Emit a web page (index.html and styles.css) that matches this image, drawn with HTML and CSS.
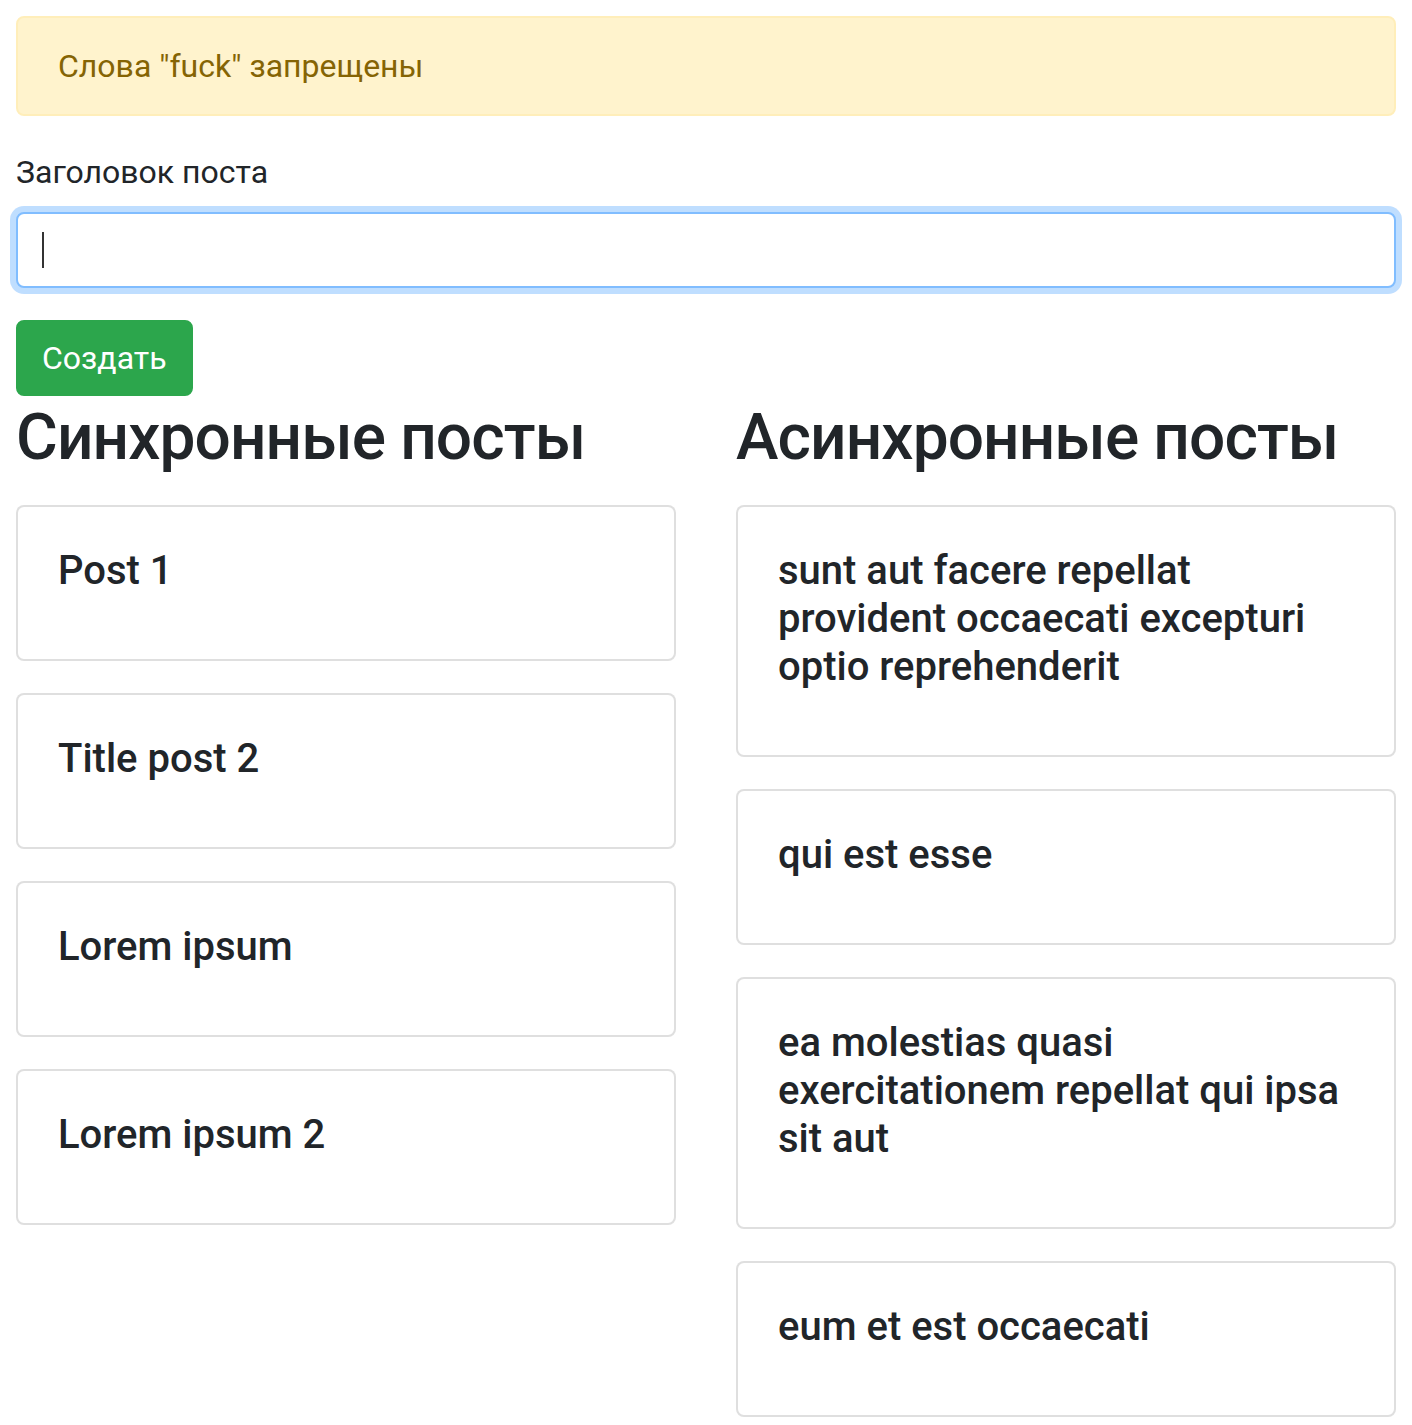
FILE: index.html
```html
<!DOCTYPE html>
<html lang="ru">
<head>
<meta charset="utf-8">
<title>Посты</title>
<link rel="stylesheet" href="styles.css">
</head>
<body>
<div class="alert">Слова "fuck" запрещены</div>
<form class="post-form">
  <div class="form-group">
    <label class="label" for="title">Заголовок поста</label>
    <div class="input-wrap">
      <input id="title" class="input input-focus" type="text">
      <span class="caret"></span>
    </div>
  </div>
  <button type="button" class="btn">Создать</button>
</form>
<div class="row">
  <div class="col">
    <h2 class="heading">Синхронные посты</h2>
    <div class="card"><div class="card-body"><h5 class="card-title">Post 1</h5></div></div>
    <div class="card"><div class="card-body"><h5 class="card-title">Title post 2</h5></div></div>
    <div class="card"><div class="card-body"><h5 class="card-title">Lorem ipsum</h5></div></div>
    <div class="card"><div class="card-body"><h5 class="card-title">Lorem ipsum 2</h5></div></div>
  </div>
  <div class="col">
    <h2 class="heading">Асинхронные посты</h2>
    <div class="card"><div class="card-body"><h5 class="card-title">sunt aut facere repellat provident occaecati excepturi optio reprehenderit</h5></div></div>
    <div class="card"><div class="card-body"><h5 class="card-title">qui est esse</h5></div></div>
    <div class="card"><div class="card-body"><h5 class="card-title">ea molestias quasi exercitationem repellat qui ipsa sit aut</h5></div></div>
    <div class="card"><div class="card-body"><h5 class="card-title">eum et est occaecati</h5></div></div>
  </div>
</div>
</body>
</html>
```
FILE: styles.css
```css
* { box-sizing: border-box; }
html, body { margin: 0; padding: 0; }
body {
  padding: 16px;
  font-family: Roboto, "Noto Sans", "Liberation Sans", sans-serif;
  font-size: 32px;
  line-height: 1.5;
  color: #212529;
  background: #fff;
}
.alert {
  padding: 24px 40px;
  margin-bottom: 32px;
  border: 2px solid #ffeeba;
  border-radius: 8px;
  background: #fff3cd;
  color: #856404;
}
.post-form { margin: 0; }
.form-group { margin-bottom: 32px; }
.label {
  display: inline-block;
  margin-bottom: 16px;
}
.input-wrap { position: relative; }
.input {
  display: block;
  width: 100%;
  height: 76px;
  padding: 12px 24px;
  font-family: inherit;
  font-size: 32px;
  line-height: 1.5;
  color: #495057;
  background: #fff;
  border: 2px solid #ced4da;
  border-radius: 8px;
  outline: none;
  caret-color: transparent;
}
.input-focus {
  border-color: #80bdff;
  box-shadow: 0 0 0 6px rgba(0, 123, 255, 0.25);
}
.caret {
  position: absolute;
  left: 26px;
  top: 20px;
  width: 2px;
  height: 36px;
  background: #333;
}
.btn {
  display: inline-block;
  padding: 12px 24px;
  font-family: inherit;
  font-size: 32px;
  line-height: 1.5;
  color: #fff;
  background: #2ca64c;
  border: 2px solid #2ca64c;
  border-radius: 8px;
  cursor: pointer;
}
.row {
  display: flex;
  margin: 0 -30px;
}
.col {
  flex: 0 0 50%;
  max-width: 50%;
  padding: 0 30px;
}
.heading {
  margin: 4px 0 28px;
  font-size: 64px;
  font-weight: 500;
  letter-spacing: -0.9px;
  line-height: 1.2;
}
.card {
  margin-bottom: 32px;
  border: 2px solid rgba(0, 0, 0, 0.125);
  border-radius: 8px;
  background: #fff;
}
.card-body { padding: 40px; }
.card-title {
  margin: 0 0 24px;
  font-size: 40px;
  font-weight: 500;
  line-height: 1.2;
}
```
